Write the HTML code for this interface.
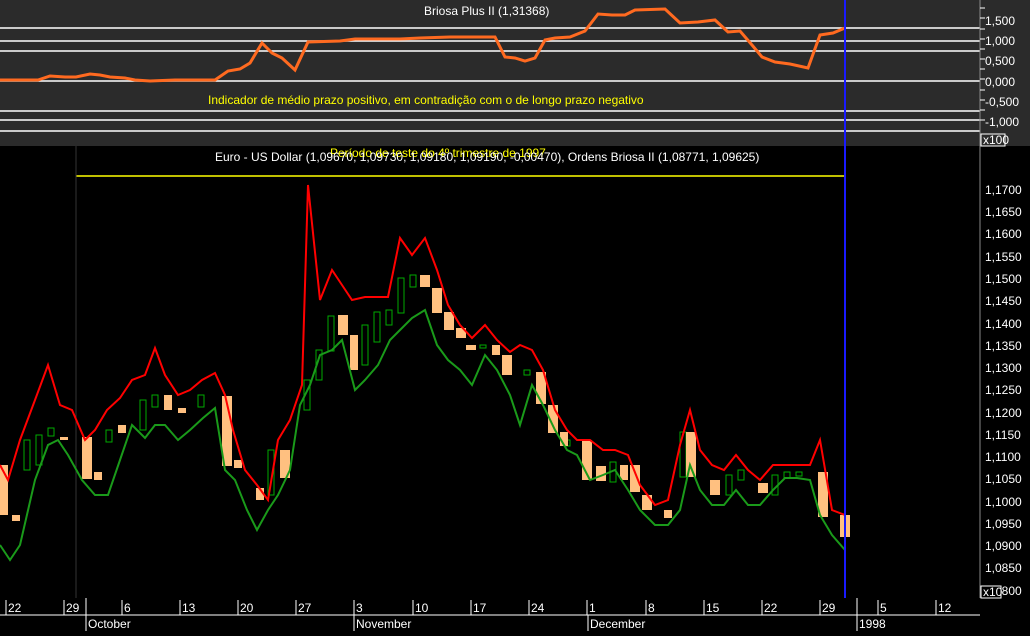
<!DOCTYPE html>
<html><head><style>
body{margin:0;background:#000;width:1030px;height:631px;overflow:hidden;font-family:"Liberation Sans",sans-serif}
svg text{font-family:"Liberation Sans",sans-serif;font-size:12px}
</style></head><body>
<svg width="1030" height="631" viewBox="0 0 1030 631">
<rect x="0" y="0" width="1030" height="146" fill="#2b2b2b"/>
<rect x="0" y="146" width="980" height="452" fill="#000"/>
<rect x="980" y="146" width="50" height="452" fill="#000"/>
<g stroke="#fff" stroke-width="1.5">
<line x1="0" y1="28" x2="980" y2="28"/><line x1="0" y1="41" x2="980" y2="41"/><line x1="0" y1="51" x2="980" y2="51"/><line x1="0" y1="81" x2="980" y2="81"/><line x1="0" y1="111" x2="980" y2="111"/><line x1="0" y1="120" x2="980" y2="120"/><line x1="0" y1="131" x2="980" y2="131"/>
</g>
<line x1="980" y1="0" x2="980" y2="598" stroke="#888"/>
<g fill="#fff" font-size="11">
<text x="985" y="25">1,500</text><text x="985" y="45">1,000</text><text x="985" y="65">0,500</text><text x="985" y="86">0,000</text><text x="985" y="106">-0,500</text><text x="985" y="126">-1,000</text>
</g>
<rect x="981" y="134" width="24" height="12" fill="none" stroke="#fff" stroke-width="1"/><text x="983" y="144" fill="#fff" font-size="9">x100</text>
<g stroke="#fff"><line x1="980" y1="8" x2="985" y2="8"/><line x1="980" y1="18" x2="985" y2="18"/><line x1="980" y1="29" x2="985" y2="29"/><line x1="980" y1="39" x2="985" y2="39"/><line x1="980" y1="49" x2="985" y2="49"/><line x1="980" y1="59" x2="985" y2="59"/><line x1="980" y1="69" x2="985" y2="69"/><line x1="980" y1="79" x2="985" y2="79"/><line x1="980" y1="90" x2="985" y2="90"/><line x1="980" y1="100" x2="985" y2="100"/><line x1="980" y1="110" x2="985" y2="110"/><line x1="980" y1="120" x2="985" y2="120"/></g>
<text x="424" y="15" fill="#fff">Briosa Plus II (1,31368)</text>
<text x="208" y="104" fill="#ff0">Indicador de médio prazo positivo, em contradição com o de longo prazo negativo</text>
<polyline fill="none" stroke="#ff6a20" stroke-width="3" points="0,80 38,80 50,76 65,77 76,77 90,74 100,75 110,77 125,78 135,80 150,81 175,80 200,80 215,80 228,71 240,69 250,63 262,43 272,53 282,58 295,70 308,42 340,41 355,39 400,39 420,38 450,37 495,37 505,57 515,58 525,61 535,58 545,40 555,38 570,37 585,31 598,14 612,15 625,15 635,10 665,9 680,23 698,22 715,20 728,32 740,31 752,45 762,57 775,62 790,64 808,68 820,35 833,33 845,28"/>
<text x="330" y="157" fill="#ff0">Período de teste do 4º trimestre de 1997</text>
<text x="215" y="161" fill="#fff">Euro - US Dollar (1,09670, 1,09730, 1,09180, 1,09190, -0,00470), Ordens Briosa II (1,08771, 1,09625)</text>
<line x1="76" y1="176" x2="845" y2="176" stroke="#ff0" stroke-width="1.5"/>
<line x1="76" y1="146" x2="76" y2="598" stroke="#333"/>
<g fill="#fff" font-size="11">
<text x="985" y="194">1,1700</text><text x="985" y="216">1,1650</text><text x="985" y="238">1,1600</text><text x="985" y="261">1,1550</text><text x="985" y="283">1,1500</text><text x="985" y="305">1,1450</text><text x="985" y="328">1,1400</text><text x="985" y="350">1,1350</text><text x="985" y="372">1,1300</text><text x="985" y="394">1,1250</text><text x="985" y="417">1,1200</text><text x="985" y="439">1,1150</text><text x="985" y="461">1,1100</text><text x="985" y="483">1,1050</text><text x="985" y="506">1,1000</text><text x="985" y="528">1,0950</text><text x="985" y="550">1,0900</text><text x="985" y="572">1,0850</text><text x="995" y="595">0800</text>
</g>
<rect x="981" y="586" width="20" height="12" fill="#000" stroke="#fff"/><text x="983" y="596" fill="#fff" font-size="9">x10</text>
<g stroke="#0a0" fill="none" stroke-width="1">
<rect x="24" y="440" width="6" height="30"/><rect x="36" y="435" width="6" height="30"/><rect x="48" y="428" width="6" height="8"/><rect x="106" y="430" width="6" height="12"/><rect x="140" y="400" width="6" height="30"/><rect x="152" y="395" width="6" height="12"/><rect x="198" y="395" width="6" height="12"/><rect x="268" y="450" width="6" height="45"/><rect x="304" y="380" width="6" height="30"/><rect x="316" y="350" width="6" height="30"/><rect x="328" y="316" width="6" height="35"/><rect x="362" y="325" width="6" height="40"/><rect x="374" y="312" width="6" height="30"/><rect x="386" y="310" width="6" height="15"/><rect x="398" y="278" width="6" height="35"/><rect x="410" y="275" width="6" height="12"/><rect x="480" y="345" width="6" height="3"/><rect x="524" y="370" width="6" height="5"/><rect x="564" y="440" width="6" height="6"/><rect x="610" y="462" width="6" height="20"/><rect x="680" y="432" width="6" height="45"/><rect x="726" y="475" width="6" height="20"/><rect x="738" y="470" width="6" height="10"/><rect x="772" y="475" width="6" height="20"/><rect x="784" y="472" width="6" height="6"/><rect x="796" y="472" width="6" height="4"/>
</g>
<g fill="#ffc080">
<rect x="0" y="465" width="8" height="50"/><rect x="12" y="515" width="8" height="6"/><rect x="60" y="437" width="8" height="3"/><rect x="82" y="437" width="10" height="42"/><rect x="94" y="472" width="8" height="8"/><rect x="118" y="425" width="8" height="8"/><rect x="164" y="395" width="8" height="15"/><rect x="178" y="408" width="8" height="5"/><rect x="222" y="396" width="10" height="70"/><rect x="234" y="460" width="8" height="8"/><rect x="256" y="488" width="8" height="12"/><rect x="280" y="450" width="10" height="28"/><rect x="338" y="315" width="10" height="20"/><rect x="350" y="335" width="8" height="35"/><rect x="420" y="275" width="10" height="12"/><rect x="432" y="288" width="10" height="25"/><rect x="444" y="312" width="10" height="18"/><rect x="456" y="328" width="10" height="10"/><rect x="466" y="345" width="10" height="5"/><rect x="492" y="345" width="8" height="10"/><rect x="502" y="355" width="10" height="20"/><rect x="536" y="372" width="10" height="32"/><rect x="548" y="405" width="10" height="28"/><rect x="560" y="432" width="8" height="14"/><rect x="582" y="440" width="10" height="40"/><rect x="596" y="466" width="10" height="15"/><rect x="620" y="465" width="8" height="15"/><rect x="630" y="465" width="10" height="27"/><rect x="642" y="495" width="10" height="15"/><rect x="664" y="510" width="8" height="8"/><rect x="686" y="432" width="10" height="45"/><rect x="710" y="480" width="10" height="15"/><rect x="758" y="483" width="10" height="10"/><rect x="818" y="472" width="10" height="45"/><rect x="840" y="515" width="10" height="22"/>
</g>
<polyline fill="none" stroke="#f00" stroke-width="2" points="0,465 8,480 20,440 35,400 48,365 60,405 72,410 85,440 95,430 107,410 120,398 132,380 145,375 155,348 165,375 178,395 190,390 202,380 215,373 225,395 233,430 245,470 257,485 268,500 278,440 290,420 302,385 308,185 320,300 332,270 342,285 352,300 365,297 378,297 388,297 400,238 412,255 425,238 437,270 448,305 460,325 472,338 485,325 497,340 510,352 520,345 532,350 543,370 555,410 567,430 577,440 590,440 603,450 615,450 628,455 640,485 655,505 668,500 680,445 690,410 700,450 712,465 724,470 736,455 748,470 760,480 773,465 785,465 797,465 810,465 820,440 832,510 845,515"/>
<polyline fill="none" stroke="#1a9a1a" stroke-width="2" points="0,545 10,560 20,545 35,480 48,445 58,440 68,455 82,480 95,495 108,495 120,460 132,425 145,438 155,425 165,425 178,440 190,430 203,418 215,408 225,470 235,480 247,510 257,530 268,510 278,495 290,470 300,405 310,385 320,355 332,350 342,340 355,390 365,380 378,365 390,340 400,330 412,318 425,310 437,345 448,360 460,370 472,385 485,355 497,370 510,395 520,425 532,385 543,405 555,430 567,450 577,455 590,480 603,475 615,470 628,490 640,510 655,525 668,525 680,510 690,465 700,490 712,505 724,505 736,490 748,505 760,505 773,490 785,478 797,478 810,480 820,515 832,535 845,550"/>
<line x1="845" y1="0" x2="845" y2="598" stroke="#1a1aff" stroke-width="2"/>
<line x1="0" y1="615" x2="980" y2="615" stroke="#fff"/>
<g stroke="#fff">
<line x1="6" y1="600" x2="6" y2="615"/><line x1="64" y1="600" x2="64" y2="615"/><line x1="122" y1="600" x2="122" y2="615"/><line x1="180" y1="600" x2="180" y2="615"/><line x1="238" y1="600" x2="238" y2="615"/><line x1="296" y1="600" x2="296" y2="615"/><line x1="354" y1="600" x2="354" y2="615"/><line x1="413" y1="600" x2="413" y2="615"/><line x1="471" y1="600" x2="471" y2="615"/><line x1="529" y1="600" x2="529" y2="615"/><line x1="587" y1="600" x2="587" y2="615"/><line x1="646" y1="600" x2="646" y2="615"/><line x1="704" y1="600" x2="704" y2="615"/><line x1="762" y1="600" x2="762" y2="615"/><line x1="820" y1="600" x2="820" y2="615"/><line x1="878" y1="600" x2="878" y2="615"/><line x1="936" y1="600" x2="936" y2="615"/>
<line x1="86" y1="598" x2="86" y2="631"/><line x1="354" y1="615" x2="354" y2="631"/><line x1="588" y1="615" x2="588" y2="631"/><line x1="857" y1="598" x2="857" y2="631"/>
</g>
<g fill="#fff">
<text x="8" y="612">22</text><text x="66" y="612">29</text><text x="124" y="612">6</text><text x="182" y="612">13</text><text x="240" y="612">20</text><text x="298" y="612">27</text><text x="356" y="612">3</text><text x="415" y="612">10</text><text x="473" y="612">17</text><text x="531" y="612">24</text><text x="589" y="612">1</text><text x="648" y="612">8</text><text x="706" y="612">15</text><text x="764" y="612">22</text><text x="822" y="612">29</text><text x="880" y="612">5</text><text x="938" y="612">12</text>
<text x="88" y="628">October</text><text x="356" y="628">November</text><text x="590" y="628">December</text><text x="859" y="628">1998</text>
</g>
</svg>
</body></html>
